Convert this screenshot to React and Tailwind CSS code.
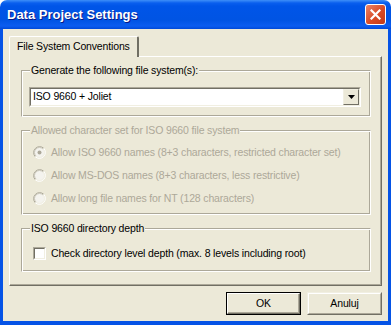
import React from "react";

const FONT = "font-['Liberation_Sans',Arial,sans-serif]";

function Radio({ checked }) {
    return (
        <svg width="13" height="13" viewBox="0 0 13 13" className="shrink-0">
            <circle cx="6.5" cy="6.5" r="5.5" fill="#F4F3EE" />
            <path d="M2.26 10.74 A6 6 0 0 1 10.74 2.26" fill="none" stroke="#ACA899" strokeWidth="1" />
            <path d="M10.74 2.26 A6 6 0 0 1 2.26 10.74" fill="none" stroke="#FFFFFF" strokeWidth="1" />
            <path d="M2.96 10.04 A5 5 0 0 1 10.04 2.96" fill="none" stroke="#C9C6B8" strokeWidth="1" />
            <path d="M10.04 2.96 A5 5 0 0 1 2.96 10.04" fill="none" stroke="#F1EFE2" strokeWidth="1" />
            {checked && <circle cx="6.5" cy="6.5" r="2" fill="#ACA899" />}
        </svg>
    );
}

function Checkbox() {
    return (
        <div className="w-[13px] h-[13px] shrink-0 border border-t-[#ACA899] border-l-[#ACA899] border-b-white border-r-white">
            <div className="w-full h-full bg-white border border-t-[#716F64] border-l-[#716F64] border-b-[#F1EFE2] border-r-[#F1EFE2]" />
        </div>
    );
}

function Group({ label, disabled, children, className }) {
    return (
        <fieldset
            className={
                "mx-[11px] w-[350px] border border-t-[#ACA899] border-l-[#ACA899] border-b-white border-r-white shadow-[inset_1px_1px_0_#fff,inset_-1px_-1px_0_#ACA899] " +
                className
            }
        >
            <legend
                className={
                    "ml-[8px] px-[1px] leading-[13px] bg-[#ECE9D8] " +
                    (disabled ? "text-[#ACA899]" : "text-black")
                }
            >
                {label}
            </legend>
            {children}
        </fieldset>
    );
}

function Button({ children, isDefault }) {
    if (isDefault) {
        return (
            <div className="w-[75px] h-[23px] border border-black">
                <div className="w-full h-full flex items-center justify-center border border-t-white border-l-white border-b-[#716F64] border-r-[#716F64] shadow-[inset_-1px_-1px_0_#ACA899]">
                    {children}
                </div>
            </div>
        );
    }
    return (
        <div className="w-[75px] h-[23px] border border-t-[#F1EFE2] border-l-[#F1EFE2] border-b-[#716F64] border-r-[#716F64]">
            <div className="w-full h-full flex items-center justify-center border border-t-white border-l-white border-b-[#ACA899] border-r-[#ACA899]">
                {children}
            </div>
        </div>
    );
}

export default function App() {
    const radios = [
        { text: "Allow ISO 9660 names (8+3 characters, restricted character set)", checked: true },
        { text: "Allow MS-DOS names (8+3 characters, less restrictive)", checked: false },
        { text: "Allow long file names for NT (128 characters)", checked: false },
    ];

    return (
        <div className={"w-[391px] h-[325px] bg-white flex flex-col text-[10.5px] tracking-[-0.15px] text-black " + FONT}>

            {/* TITLE BAR */}
            <div className="h-[29px] shrink-0 rounded-t-[7px] flex items-center pl-[7px] pr-[5px] bg-[linear-gradient(180deg,#3E8FF8_0px,#0A5FEE_3px,#0055E8_6px,#0054E3_20px,#0B5DF0_26px,#0049D8_29px)]">
                <span className="text-white font-bold text-[13px] tracking-normal leading-none [text-shadow:1px_1px_0_#0A1883]">
                    Data Project Settings
                </span>
                <div className="ml-auto w-[21px] h-[21px] rounded-[3px] border border-white bg-[linear-gradient(135deg,#E9856A,#D84A25_55%,#C23A17)] flex items-center justify-center">
                    <svg width="11" height="11" viewBox="0 0 11 11">
                        <path d="M1.5 1.5 L9.5 9.5 M9.5 1.5 L1.5 9.5" stroke="#fff" strokeWidth="2.2" strokeLinecap="square" />
                    </svg>
                </div>
            </div>

            {/* BODY */}
            <div className="flex-1 flex flex-col bg-[#ECE9D8] border-l-[3px] border-r-[3px] border-b-[4px] border-[#0553E6] px-[6px] pt-[7px]">

                {/* TABS */}
                <div className="flex">
                    <div className="relative z-10 -mb-[1px] h-[21px] w-[130px] whitespace-nowrap bg-[#ECE9D8] rounded-tl-[2px] rounded-tr-[2px] border-l border-t border-white border-r-2 border-r-[#716F64] pl-[7px] pt-[2px]">
                        File System Conventions
                    </div>
                </div>

                {/* PANEL */}
                <div className="h-[230px] border-l border-t border-white border-r border-b border-r-[#716F64] border-b-[#716F64] shadow-[inset_-1px_-1px_0_#ACA899]">

                    <Group label="Generate the following file system(s):" className="mt-[7px] pt-[10px] pb-[9px]">
                        <div className="ml-[7px] w-[332px] h-[20px] border border-t-[#ACA899] border-l-[#ACA899] border-b-white border-r-white">
                            <div className="w-full h-full bg-white flex items-center border border-t-[#716F64] border-l-[#716F64] border-b-[#F1EFE2] border-r-[#F1EFE2]">
                                <span className="pl-[2px] flex-1">ISO 9660 + Joliet</span>
                                <div className="w-[16px] h-full border border-t-[#F1EFE2] border-l-[#F1EFE2] border-b-[#716F64] border-r-[#716F64] bg-[#ECE9D8] flex items-center justify-center">
                                    <svg width="7" height="4" viewBox="0 0 7 4">
                                        <path d="M0 0 H7 L3.5 4 Z" fill="#000" />
                                    </svg>
                                </div>
                            </div>
                        </div>
                    </Group>

                    <Group label="Allowed character set for ISO 9660 file system" disabled className="mt-[7px] pt-[4px] pb-[4px]">
                        {radios.map((r) => (
                            <div key={r.text} className="h-[23px] flex items-center pl-[11px] gap-[5px] text-[#ACA899]">
                                <Radio checked={r.checked} />
                                <span>{r.text}</span>
                            </div>
                        ))}
                    </Group>

                    <Group label="ISO 9660 directory depth" className="mt-[7px] pt-[7px] pb-[6px]">
                        <div className="h-[23px] flex items-center pl-[11px] gap-[5px]">
                            <Checkbox />
                            <span>Check directory level depth (max. 8 levels including root)</span>
                        </div>
                    </Group>
                </div>

                {/* BUTTONS */}
                <div className="flex justify-end gap-[6px] mt-[6px]">
                    <Button isDefault>OK</Button>
                    <Button>Anuluj</Button>
                </div>
            </div>
        </div>
    );
}
